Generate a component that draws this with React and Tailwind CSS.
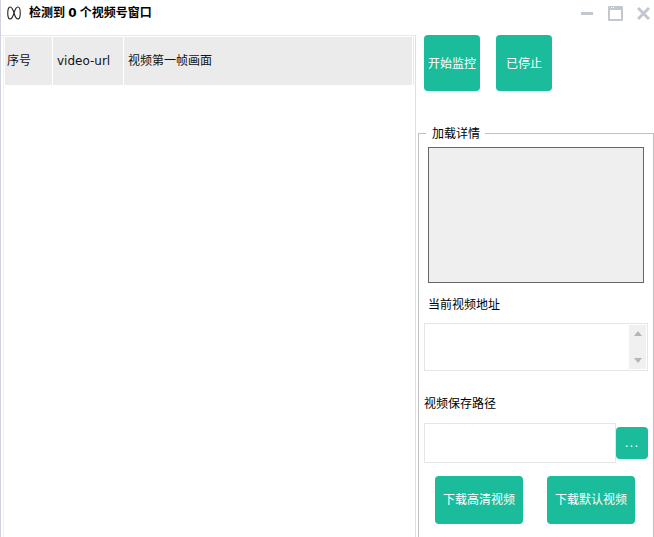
import React from "react";

const font = { fontFamily: '"DejaVu Sans", "Noto Sans CJK SC", sans-serif' };

const GreenButton = ({ className, children }) => (
  <button className={`bg-[#1abc9c] text-white text-[12px] rounded-[4px] flex items-center justify-center ${className}`}>
    {children}
  </button>
);

const TitleBar = () => (
  <div className="h-[35px] shrink-0 flex items-start">
    <svg className="ml-[6px] mt-[6px]" width="14" height="14" viewBox="0 0 14 14" fill="none" stroke="#222" strokeWidth="1.1">
      <path d="M7 7C6 3.5 4.5 1 3 1C0 1 0 13 3 13C4.5 13 6 10.5 7 7C8 3.5 9.5 1 11 1C14 1 14 13 11 13C9.5 13 8 10.5 7 7Z" />
    </svg>
    <span className="ml-[8px] mt-[5px] text-[12px] leading-[16px] font-bold text-black [word-spacing:-1px]">检测到 0 个视频号窗口</span>
    <div className="ml-auto mr-[4px] mt-[6px] flex items-center">
      <span className="w-[12px] h-[3px] bg-[#c3c8cf] mr-[15px]" />
      <svg className="mr-[14px]" width="15" height="15" viewBox="0 0 15 15">
        <path fill="#c3c8cf" fillRule="evenodd" d="M0 1a1 1 0 0 1 1-1h13a1 1 0 0 1 1 1v13a1 1 0 0 1-1 1H1a1 1 0 0 1-1-1ZM2 4v9h11V4Z" />
        <path fill="#fff" d="M3 1h1v1H3ZM5 1h1v1H5Z" />
      </svg>
      <svg width="13" height="13" viewBox="0 0 13 13" stroke="#c3c8cf" strokeWidth="3">
        <path d="M1 1L12 12M12 1L1 12" />
      </svg>
    </div>
  </div>
);

const VideoTable = () => (
  <div className="w-[415px] shrink-0 border-t border-t-[#e8e8e8] border-r border-r-[#e0e0e0] pl-[2px]">
    <div className="flex h-full border-l border-l-[#f0f0f0] pl-px pt-px items-start">
      <div className="flex h-[48px] w-[407px] gap-px text-[12px] text-[#111]">
        <div className="w-[47px] bg-[#ebebeb] flex items-center pl-[2px]">序号</div>
        <div className="w-[70px] bg-[#ebebeb] flex items-center pl-[4px]">video-url</div>
        <div className="flex-1 bg-[#ebebeb] flex items-center pl-[4px]">视频第一帧画面</div>
      </div>
      <div className="ml-px w-px h-[48px] bg-[#e8e8e8]" />
    </div>
  </div>
);

const SidePanel = () => (
  <div className="flex-1 min-w-0 flex flex-col">
    <div className="flex gap-[16px] pl-[8px]">
      <GreenButton className="w-[56px] h-[56px] pt-[2px]">开始监控</GreenButton>
      <GreenButton className="w-[56px] h-[56px] pt-[2px]">已停止</GreenButton>
    </div>
    <fieldset className="mt-[34px] ml-[2px] min-w-0 flex-1 border border-[#c0c0c0] border-b-0 pl-[9px] pr-[9px]">
      <legend className="-ml-[2px] pl-[6px] pr-[5px] pt-[2px] text-[12px] leading-[14px] text-black">加载详情</legend>
      <div className="w-[216px] h-[136px] mt-[6px] bg-[#efefef] border border-[#666]" />
      <div className="mt-[14px] text-[12px] leading-[16px] text-black">当前视频地址</div>
      <div className="mt-[10px] -ml-[4px] w-[224px] h-[48px] border border-[#e6e6e6] flex justify-end p-[1px]">
        <div className="w-[17px] bg-[#f0f0f0] flex flex-col items-center justify-between py-[6px]">
          <span className="w-0 h-0 border-x-[4px] border-x-transparent border-b-[5px] border-b-[#b5b5b5]" />
          <span className="w-0 h-0 border-x-[4px] border-x-transparent border-t-[5px] border-t-[#b5b5b5]" />
        </div>
      </div>
      <div className="mt-[25px] -ml-[4px] text-[12px] leading-[16px] text-black">视频保存路径</div>
      <div className="mt-[11px] -ml-[4px] w-[224px] flex items-center">
        <div className="w-[192px] h-[40px] shrink-0 border border-[#e6e6e6]" />
        <GreenButton className="w-[32px] h-[32px] shrink-0 tracking-[1px]">...</GreenButton>
      </div>
      <div className="mt-[13px] flex gap-[24px] pl-[7px]">
        <GreenButton className="w-[88px] h-[48px]">下载高清视频</GreenButton>
        <GreenButton className="w-[88px] h-[48px]">下载默认视频</GreenButton>
      </div>
    </fieldset>
  </div>
);

export default function App() {
  return (
    <div className="w-[654px] h-[537px] bg-white overflow-hidden flex flex-col border-l border-l-[#d0d4dc]" style={font}>
      <TitleBar />
      <div className="flex flex-1 min-h-0">
        <VideoTable />
        <SidePanel />
      </div>
    </div>
  );
}
